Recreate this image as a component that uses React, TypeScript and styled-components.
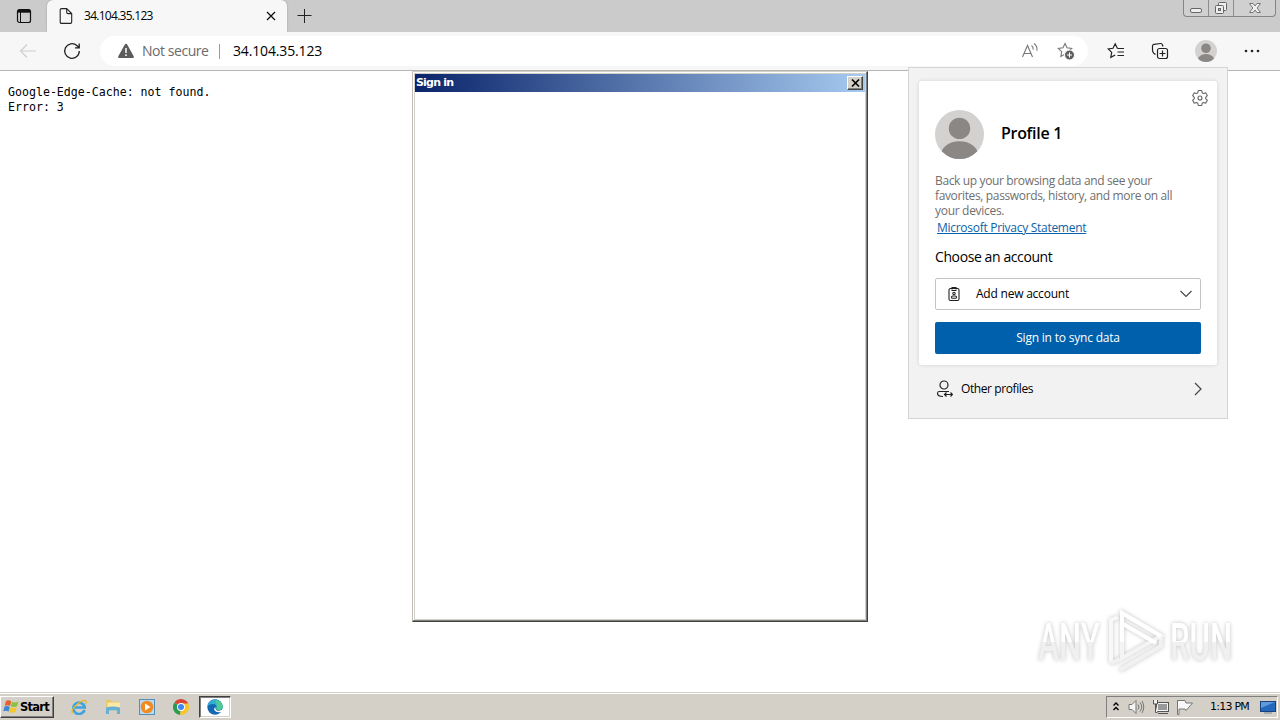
import React from "react";
import styled, { createGlobalStyle } from "styled-components";

const uiFont = `"Open Sans", "Noto Sans", sans-serif`;
const classicFont = `"DejaVu Sans", sans-serif`;

const GlobalStyle = createGlobalStyle`
    * {
        box-sizing: border-box;
    }
    body {
        margin: 0;
        background: #fff;
        overflow: hidden;
    }
    svg {
        display: block;
        flex-shrink: 0;
    }
`;

const Screen = styled.div`
    position: relative;
    width: 1280px;
    height: 720px;
    display: flex;
    flex-direction: column;
    overflow: hidden;
    background: #fff;
    font-family: ${uiFont};
    color: #000;
`;

interface LabelProps {
    $size: number;
    $spacing?: number;
    $weight?: number;
    $color?: string;
    $line?: number;
}

const Label = styled.span<LabelProps>`
    font-size: ${p => p.$size}px;
    letter-spacing: ${p => p.$spacing || 0}px;
    font-weight: ${p => p.$weight || 400};
    color: ${p => p.$color || "#000"};
    line-height: ${p => p.$line || 16}px;
    white-space: nowrap;
`;

/* Tab strip */

const TabStrip = styled.div`
    display: flex;
    height: 32px;
    background: #cbcbcb;
`;

const TabActions = styled.div`
    width: 47px;
    padding: 8px 0 0 16px;
`;

const Tab = styled.div`
    display: flex;
    align-items: center;
    width: 240px;
    height: 32px;
    padding: 0 10px 0 12px;
    background: #f7f7f7;
    border-radius: 6px 6px 0 0;
    box-shadow: 0 0 2px rgba(0, 0, 0, 0.25);
`;

const TabTitle = styled.div`
    flex: 1;
    display: flex;
    padding-left: 11px;
`;

const NewTab = styled.div`
    padding: 8px 0 0 10px;
    flex: 1;
`;

const WindowControls = styled.div`
    display: flex;
    width: 93px;
    height: 17px;
    margin-right: 4px;
    border: 1px solid #858585;
    border-top: 0;
    border-radius: 0 0 4px 4px;
    background: #d0d0d0;
`;

const WindowControl = styled.div<{ $width: number }>`
    display: flex;
    justify-content: center;
    width: ${p => p.$width}px;
    border-right: 1px solid #8d8d8d;
    &:last-child {
        border-right: 0;
    }
`;

/* Toolbar */

const Toolbar = styled.div`
    display: flex;
    align-items: center;
    height: 39px;
    background: #f7f7f7;
    border-bottom: 1px solid #b5b5b5;
`;

const NavButtons = styled.div`
    display: flex;
    align-items: center;
    gap: 26px;
    width: 100px;
    padding-left: 19px;
`;

const AddressBar = styled.div`
    display: flex;
    align-items: center;
    width: 988px;
    height: 30px;
    padding: 0 13px 0 17px;
    border-radius: 15px;
    background: #fff;
`;

const SecurityText = styled.div`
    display: flex;
    width: 77px;
    padding-left: 7px;
`;

const Separator = styled.div`
    width: 1px;
    height: 15px;
    margin: 0 13px 0 7px;
    background: #9a9a9a;
`;

const Url = styled.div`
    flex: 1;
    display: flex;
`;

const AddressActions = styled.div`
    display: flex;
    align-items: center;
    gap: 18px;
`;

const ToolbarActions = styled.div`
    display: flex;
    align-items: center;
    padding-left: 19px;
    gap: 26px;
`;

/* Page */

const Page = styled.div`
    flex: 1;
    padding: 14px 8px;
    background: #fff;
`;

const PlainText = styled.pre`
    margin: 0;
    font: 11.6px/15px "DejaVu Sans Mono", monospace;
    color: #000;
`;

/* Sign in dialog */

const Dialog = styled.div`
    position: absolute;
    left: 412px;
    top: 71px;
    width: 456px;
    height: 551px;
    display: flex;
    flex-direction: column;
    padding: 1px;
    background: #fff;
    border: 1px solid;
    border-color: #d4d0c8 #404040 #404040 #c2c0bc;
    box-shadow: inset -1px -1px 0 #808080, inset 1px 1px 0 #fff, inset 2px 2px 0 #d4d0c8, inset -2px -2px 0 #d4d0c8;
`;

const DialogTitle = styled.div`
    display: flex;
    align-items: center;
    justify-content: space-between;
    height: 18px;
    margin: 1px 1px 0 1px;
    padding: 0 2px 0 1px;
    font-family: ${classicFont};
    background: linear-gradient(90deg, #0a246a, #a6caf0);
`;

const DialogClose = styled.div`
    display: flex;
    align-items: center;
    justify-content: center;
    width: 16px;
    height: 14px;
    background: #d4d0c8;
    border: 1px solid;
    border-color: #fff #404040 #404040 #fff;
    box-shadow: inset -1px -1px 0 #808080;
`;

/* Profile flyout */

const Flyout = styled.div`
    position: absolute;
    left: 908px;
    top: 67px;
    width: 320px;
    height: 352px;
    padding: 13px 10px 0 10px;
    background: #f2f2f2;
    border: 1px solid #d5d5d5;
`;

const ProfileCard = styled.div`
    display: flex;
    flex-direction: column;
    height: 284px;
    padding: 8px 16px 0 16px;
    background: #fff;
    border-radius: 3px;
    box-shadow: 0 0 4px rgba(0, 0, 0, 0.13);
`;

const CardTop = styled.div`
    display: flex;
    justify-content: flex-end;
    height: 21px;
    margin-right: -8px;
`;

const ProfileRow = styled.div`
    display: flex;
    align-items: center;
    gap: 17px;
    height: 49px;
`;

const ProfileName = styled.div`
    display: flex;
    padding-bottom: 3px;
`;

const Description = styled.div`
    display: flex;
    flex-direction: column;
    margin-top: 14px;
`;

const PrivacyLink = styled.a`
    margin: 2px 0 0 2px;
    font-size: 12px;
    line-height: 16px;
    letter-spacing: -0.28px;
    color: #0b62a8;
    text-decoration: underline;
    white-space: nowrap;
`;

const AccountTitle = styled.div`
    display: flex;
    margin-top: 12px;
`;

const AccountSelect = styled.div`
    display: flex;
    align-items: center;
    height: 32px;
    margin-top: 12px;
    padding: 0 8px 0 12px;
    border: 1px solid #c4c4c4;
    border-radius: 2px;
`;

const SelectText = styled.div`
    display: flex;
    flex: 1;
    padding-left: 16px;
`;

const SignInButton = styled.div`
    display: flex;
    align-items: center;
    justify-content: center;
    height: 32px;
    margin-top: 12px;
    border-radius: 2px;
    background: #0060ac;
`;

const OtherProfiles = styled.div`
    display: flex;
    align-items: center;
    height: 48px;
    padding: 0 15px 0 17px;
`;

const OtherText = styled.div`
    display: flex;
    flex: 1;
    padding-left: 8px;
`;

/* Taskbar */

const Taskbar = styled.div`
    display: flex;
    align-items: center;
    height: 28px;
    padding: 1px 2px 1px 0;
    border-top: 1px solid #d4d0c8;
    box-shadow: inset 0 1px 0 #fff;
    background: #d4d0c8;
    font-family: ${classicFont};
`;

const StartButton = styled.div`
    display: flex;
    align-items: center;
    width: 54px;
    height: 22px;
    padding-left: 2px;
    border: 1px solid;
    border-color: #fff #404040 #404040 #fff;
    box-shadow: inset -1px -1px 0 #808080;
`;

const QuickLaunch = styled.div`
    display: flex;
    align-items: center;
    gap: 18px;
    flex: 1;
    padding-left: 17px;
`;

const ActiveTask = styled.div`
    display: flex;
    align-items: center;
    justify-content: center;
    width: 32px;
    height: 22px;
    margin-left: -8px;
    background: #fff;
    border: 1px solid;
    border-color: #404040 #fff #fff #404040;
    box-shadow: inset 1px 1px 0 #808080, inset -1px -1px 0 #d4d0c8;
`;

const Tray = styled.div`
    display: flex;
    align-items: center;
    width: 172px;
    height: 22px;
    padding-left: 5px;
    border: 1px solid;
    border-color: #808080 #fff #fff #808080;
`;

const TrayIcons = styled.div`
    display: flex;
    align-items: center;
    gap: 8px;
    width: 98px;
`;

const Clock = styled.div`
    display: flex;
    width: 50px;
    padding-top: 1px;
`;

/* Watermark */

const Watermark = styled.div`
    position: absolute;
    left: 1036px;
    top: 606px;
    width: 198px;
    height: 70px;
    display: flex;
    align-items: center;
    justify-content: space-between;
    filter: drop-shadow(0 0 2px rgba(0, 0, 0, 0.24));
`;

const WatermarkText = styled.span`
    flex-shrink: 0;
    width: 110px;
    margin: 0 -22px;
    padding-top: 4px;
    text-align: center;
    font: 500 51px/60px Roboto, sans-serif;
    background: linear-gradient(#fff 0 52%, #f0f0f0 52%);
    background-clip: text;
    -webkit-background-clip: text;
    color: transparent;
    transform: scaleX(0.61);
`;

const Avatar = ({ size }: { size: number }) => (
    <svg width={size} height={size} viewBox="0 0 48 48">
        <defs>
            <clipPath id={`avatar-${size}`}>
                <circle cx="24" cy="24" r="24" />
            </clipPath>
        </defs>
        <g clipPath={`url(#avatar-${size})`}>
            <rect width="48" height="48" fill="#d4d2d0" />
            <circle cx="24" cy="18" r="10.5" fill="#8b8785" />
            <ellipse cx="24" cy="46" rx="19" ry="15.5" fill="#8b8785" />
        </g>
    </svg>
);

const BrowserTabs = () => (
    <TabStrip>
        <TabActions>
            <svg width="16" height="16" viewBox="0 0 16 16" fill="none" stroke="#111">
                <rect x="1.5" y="1.5" width="13" height="13" rx="2" strokeWidth="1.2" />
                <path d="M2 3.2h12" strokeWidth="3" />
                <path d="M4.5 4v10" />
            </svg>
        </TabActions>
        <Tab>
            <svg width="14" height="16" viewBox="0 0 14 16" fill="none" stroke="#222" strokeWidth="1.1">
                <path d="M2.5.6h5.2l5 5v8.5c0 .8-.5 1.3-1.3 1.3h-9c-.7 0-1.2-.5-1.2-1.3V1.8C1.2 1.1 1.7.6 2.5.6zM7.7.6v3.7c0 .8.5 1.3 1.3 1.3h3.7" />
            </svg>
            <TabTitle><Label $size={12} $spacing={-0.72}>34.104.35.123</Label></TabTitle>
            <svg width="12" height="12" viewBox="0 0 12 12" stroke="#111" strokeWidth="1.3">
                <path d="M2 2l8 8M10 2l-8 8" />
            </svg>
        </Tab>
        <NewTab>
            <svg width="16" height="16" viewBox="0 0 16 16" stroke="#222">
                <path d="M7.5 1v14M.5 7.5h14" />
            </svg>
        </NewTab>
        <WindowControls>
            <WindowControl $width={25}>
                <svg width="14" height="16" viewBox="0 0 14 16" fill="#eee" stroke="#666">
                    <rect x="1.5" y="8.5" width="11" height="4" rx="1.5" />
                </svg>
            </WindowControl>
            <WindowControl $width={25}>
                <svg width="14" height="16" viewBox="0 0 14 16" fill="#eee" stroke="#666">
                    <rect x="4.5" y="2.5" width="8" height="8" rx="1" />
                    <rect x="1.5" y="5.5" width="8" height="8" rx="1" />
                    <rect x="4.5" y="8.5" width="2" height="2" fill="#ccc" />
                </svg>
            </WindowControl>
            <WindowControl $width={41}>
                <svg width="14" height="16" viewBox="0 0 14 16" fill="#eee" stroke="#777">
                    <path d="M1.5 3.5h3.6L7 6l1.9-2.5h3.6L9.2 8l3.3 4.5H8.9L7 10l-1.9 2.5H1.5L4.8 8z" />
                </svg>
            </WindowControl>
        </WindowControls>
    </TabStrip>
);

const BrowserToolbar = () => (
    <Toolbar>
        <NavButtons>
            <svg width="18" height="16" viewBox="0 0 18 16" fill="none" stroke="#cfcfcf" strokeWidth="1.2">
                <path d="M8 1.5L1.5 8 8 14.5M1.5 8H17" />
            </svg>
            <svg width="18" height="18" viewBox="0 0 18 18" fill="none" stroke="#222" strokeWidth="1.3">
                <path d="M16.3 9A7.3 7.3 0 1 1 13.8 3.5L16 5.5M16.2 1.5v4.3H12" />
            </svg>
        </NavButtons>
        <AddressBar>
            <svg width="18" height="16" viewBox="0 0 18 16">
                <path d="M9 .8c.5 0 .9.3 1.2.7l6.5 11.7c.5.9-.1 1.9-1.1 1.9H2.4c-1 0-1.6-1-1.1-1.9L7.8 1.5C8.1 1.1 8.5.8 9 .8z" fill="#5c5c5c" />
                <path d="M9 5v5" stroke="#fff" strokeWidth="1.5" />
                <circle cx="9" cy="12.2" r=".9" fill="#fff" />
            </svg>
            <SecurityText><Label $size={14} $spacing={-0.45} $color="#6b6b6b">Not secure</Label></SecurityText>
            <Separator />
            <Url><Label $size={14} $spacing={-0.15}>34.104.35.123</Label></Url>
            <AddressActions>
                <svg width="18" height="18" viewBox="0 0 18 18" fill="none" stroke="#777" strokeWidth="1.1">
                    <path d="M1.5 15L6.500 3.500 11.500 15M3 11.500h7M10.500 3.500q2 1.500 1.700 4.300M13 1.500q3.500 2.500 3 7.300" />
                </svg>
                <svg width="18" height="18" viewBox="0 0 18 18">
                    <path d="M8 1.5l2 4.3 4.7.6-3.4 3.3.8 4.7L8 12.1l-4.1 2.3.8-4.7L1.3 6.4 6 5.8z" fill="none" stroke="#777" strokeWidth="1.1" />
                    <circle cx="12.5" cy="13" r="5" fill="#5f5f5f" stroke="#fff" />
                    <path d="M12.5 10.5v5M10 13h5" stroke="#fff" />
                </svg>
            </AddressActions>
        </AddressBar>
        <ToolbarActions>
            <svg width="18" height="18" viewBox="0 0 18 18" fill="none" stroke="#222" strokeWidth="1.2">
                <path d="M10.5 6.5L8.2 1.8 6 6.3l-4.8.6 3.5 3.5-.9 5 4.4-2.4M10.5 6.5h6.5M10.5 10h6.5M10.5 13.5h6.5" />
            </svg>
            <svg width="18" height="18" viewBox="0 0 18 18" fill="none" stroke="#222" strokeWidth="1.2">
                <rect x="6.5" y="6.5" width="10" height="10" rx="2" />
                <path d="M11.5 8.5v6M8.5 11.5h6M4.5 12.5L2.7 11.2Q1.5 10 1.5 8V4Q1.5 2.5 3 2.3L9.5 1.5Q11 1.3 11.5 3L12 4.5" />
            </svg>
            <Avatar size={22} />
            <svg width="18" height="16" viewBox="0 0 18 16" fill="#222">
                <circle cx="3" cy="8" r="1.3" />
                <circle cx="9" cy="8" r="1.3" />
                <circle cx="15" cy="8" r="1.3" />
            </svg>
        </ToolbarActions>
    </Toolbar>
);

const SignInDialog = () => (
    <Dialog>
        <DialogTitle>
            <Label $size={11} $weight={700} $spacing={-0.8} $line={20}  $color="#fff">Sign in</Label>
            <DialogClose>
                <svg width="9" height="8" viewBox="0 0 9 8" stroke="#000" strokeWidth="1.6">
                    <path d="M1 .5l7 7M8 .5l-7 7" />
                </svg>
            </DialogClose>
        </DialogTitle>
    </Dialog>
);

const ProfileFlyout = () => (
    <Flyout>
        <ProfileCard>
            <CardTop>
                <svg width="18" height="18" viewBox="0 0 18 18" fill="none" stroke="#666" strokeWidth="1.1">
                    <path d="M7.3 1.5h3.4l.5 2.3 1.3.8 2.2-.8 1.7 2.9L14.7 8.3v1.4l1.7 1.6-1.7 2.9-2.2-.8-1.3.8-.5 2.3H7.3l-.5-2.3-1.3-.8-2.2.8-1.7-2.9 1.7-1.6V8.3L1.6 6.7l1.7-2.9 2.2.8 1.3-.8z" strokeLinejoin="round" />
                    <circle cx="9" cy="9" r="2" />
                </svg>
            </CardTop>
            <ProfileRow>
                <Avatar size={49} />
                <ProfileName>
                    <Label $size={16} $weight={600} $spacing={-0.3} $line={22}>Profile 1</Label>
                </ProfileName>
            </ProfileRow>
            <Description>
                <Label $size={12} $spacing={-0.36} $line={15} $color="#6f6f6f">Back up your browsing data and see your</Label>
                <Label $size={12} $spacing={-0.36} $line={15} $color="#6f6f6f">favorites, passwords, history, and more on all</Label>
                <Label $size={12} $spacing={-0.3} $line={15} $color="#6f6f6f">your devices.</Label>
                <PrivacyLink>Microsoft Privacy Statement</PrivacyLink>
            </Description>
            <AccountTitle><Label $size={14} $spacing={-0.4} $line={18}>Choose an account</Label></AccountTitle>
            <AccountSelect>
                <svg width="12" height="16" viewBox="0 0 12 16" fill="none" stroke="#222" strokeWidth="1.1">
                    <rect x="1" y="2.5" width="10" height="12" rx="1.5" />
                    <path d="M4 3.5V1.5h4v2M3.5 4.5h5" />
                    <circle cx="6" cy="7.5" r="1.2" />
                    <rect x="3.5" y="10" width="5" height="2.2" rx="1" />
                </svg>
                <SelectText><Label $size={12} $spacing={-0.22}>Add new account</Label></SelectText>
                <svg width="12" height="8" viewBox="0 0 12 8" fill="none" stroke="#444" strokeWidth="1.1">
                    <path d="M.5 1l5.5 5.5L11.5 1" />
                </svg>
            </AccountSelect>
            <SignInButton><Label $size={12} $spacing={-0.2} $color="#fff">Sign in to sync data</Label></SignInButton>
        </ProfileCard>
        <OtherProfiles>
            <svg width="17" height="18" viewBox="0 0 17 18" fill="none" stroke="#222" strokeWidth="1.2">
                <circle cx="8" cy="5" r="4" />
                <path d="M13 11.5H3Q1.500 11.500 1.500 13.500Q1.500 16.500 7 16.500M8.500 14.500h8M10.500 12.500l-2 2 2 2M14.500 12.500l2 2-2 2" />
            </svg>
            <OtherText><Label $size={12} $spacing={-0.4}>Other profiles</Label></OtherText>
            <svg width="8" height="14" viewBox="0 0 8 14" fill="none" stroke="#444" strokeWidth="1.2">
                <path d="M1 1l6 6-6 6" />
            </svg>
        </OtherProfiles>
    </Flyout>
);

const WindowsTaskbar = () => (
    <Taskbar>
        <StartButton>
            <svg width="17" height="16" viewBox="0 0 17 16">
                <path d="M3 2Q6 .5 8.3 2.5L7 7Q4.5 5.5 1.7 6.8z" fill="#e8602c" />
                <path d="M9 2.7Q12 4.3 15.5 2.5L14 7.3Q11 8.8 7.8 7.3z" fill="#8ac140" />
                <path d="M1.5 7.6Q4.5 6.3 6.8 8L5.6 12.5Q3 11 .3 12.3z" fill="#3c87d6" />
                <path d="M7.6 8.2Q11 9.7 13.8 8.2L12.5 13Q9.5 14.5 6.3 13z" fill="#f6c52c" />
            </svg>
            <Label $size={11.5} $weight={700} $spacing={-0.75}>Start</Label>
        </StartButton>
        <QuickLaunch>
            <svg width="16" height="16" viewBox="0 0 16 16" fill="none">
                <path d="M13.5 11A5.7 5.7 0 1 1 13.7 8.5H4" stroke="#3fa3df" strokeWidth="2.7" />
                <path d="M1.5 14.5Q-.5 11 6 5.5T15 2Q15.5 3 14.5 5" stroke="#e8b62c" strokeWidth="1.3" />
            </svg>
            <svg width="16" height="16" viewBox="0 0 16 16">
                <path d="M1 1h5l1 1.5h7V12H1z" fill="#e6c76a" />
                <path d="M2.5 3.5H15V12H2.5z" fill="#f9e9a5" />
                <path d="M1 8.5q7-2 14 0V15h-3v-3.5H4V15H1z" fill="#68afd5" />
            </svg>
            <svg width="16" height="16" viewBox="0 0 16 16">
                <rect x=".5" y=".5" width="15" height="15" fill="#b9d9ef" stroke="#568ebb" />
                <circle cx="8" cy="8" r="6.3" fill="#f18a21" />
                <path d="M6 4.5v7L11.5 8z" fill="#fff" />
            </svg>
            <svg width="16" height="16" viewBox="0 0 16 16">
                <path d="M8 8L1.5 3.5A8 8 0 0 1 15.2 4.5z" fill="#dc4437" />
                <path d="M8 8L7.2 16A8 8 0 0 1 1.3 3.6z" fill="#2a9c52" />
                <path d="M8 8V4.5h7.2A8 8 0 0 1 7.2 16z" fill="#f7c52e" />
                <circle cx="8" cy="8" r="4" fill="#fff" />
                <circle cx="8" cy="8" r="3" fill="#4285f4" />
            </svg>
            <ActiveTask>
                <svg width="16" height="16" viewBox="0 0 16 16">
                    <circle cx="8" cy="8" r="7.7" fill="#1467b3" />
                    <path d="M.4 7A7.7 7.7 0 0 1 15.7 8Q15.5 11 11.5 11 8.5 11 9.7 8.5 9.5 5 6 5 2.5 5 .4 7z" fill="#2fb0d3" />
                    <path d="M10 1q5.5 2 5.7 7-.5 3-4.2 3-3 0-1.8-2.500.8-4-1.500-6z" fill="#4fcb8c" />
                    <path d="M15.800 10.300q-3 2-6 1.200Q8 10.500 8.300 8 6.800 9 7.300 11q1.500 2.500 5.500 2.200l3.200-.7z" fill="#fff" />
                </svg>
            </ActiveTask>
        </QuickLaunch>
        <Tray>
            <TrayIcons>
                <svg width="8" height="12" viewBox="0 0 8 12" fill="none" stroke="#000" strokeWidth="1.4">
                    <path d="M1.5 4.5L4 2 6.5 4.5M1.5 9L4 6.5 6.5 9" />
                </svg>
                <svg width="17" height="16" viewBox="0 0 17 16" fill="none" stroke="#777">
                    <path d="M1 5.5h3L8 1.5v13l-4-4H1z" fill="#f5f5f5" />
                    <path d="M10 5.5q2 2.5 0 5M12 3.5q3.5 4.5 0 9M14 2q3.5 6 0 12" />
                </svg>
                <svg width="16" height="16" viewBox="0 0 16 16" fill="none" stroke="#555">
                    <rect x="3.5" y="3.5" width="12" height="9" fill="#999" />
                    <path d="M4.5 4.5h10v7h-10z" stroke="#f4f4f4" />
                    <path d="M5 14.5h10" />
                    <path d="M.5 1v4h4V1M2.5 5v8.5h2" fill="#eee" />
                </svg>
                <svg width="16" height="16" viewBox="0 0 16 16" stroke="#777">
                    <path d="M.5 1v14.5H2V10h6l1 1.5L15.5 4H9L8 1.5H.5z" fill="#f8f8f8" />
                </svg>
            </TrayIcons>
            <Clock><Label $size={11} $spacing={-0.75}>1:13 PM</Label></Clock>
            <svg width="16" height="16" viewBox="0 0 16 16">
                <rect x=".5" y="2.5" width="15" height="10" fill="#2467bd" stroke="#17427e" />
                <path d="M1 3h14L1 9z" fill="#5f9ade" />
                <path d="M4 14h8" stroke="#7c8794" />
            </svg>
        </Tray>
    </Taskbar>
);

const AnyRunMark = () => (
    <Watermark>
        <WatermarkText>ANY</WatermarkText>
        <svg width="60" height="66" viewBox="0 0 60 66" fill="none" stroke="#fff" strokeWidth="4">
            <path d="M6 55V12l7-3" stroke="#f8f8f8" />
            <path d="M6 55l9-4M15 62l41-24v-9" stroke="#f1f1f1" />
            <path d="M17 48V5l39 23-39 22z" stroke="#f4f4f4" />
            <path d="M17 34V5l39 23M18 16l33 19" />
        </svg>
        <WatermarkText>RUN</WatermarkText>
    </Watermark>
);

const App = () => (
    <Screen>
        <GlobalStyle />
        <BrowserTabs />
        <BrowserToolbar />
        <Page>
            <PlainText>{"Google-Edge-Cache: not found.\nError: 3"}</PlainText>
        </Page>
        <WindowsTaskbar />
        <SignInDialog />
        <ProfileFlyout />
        <AnyRunMark />
    </Screen>
);

export default App;
